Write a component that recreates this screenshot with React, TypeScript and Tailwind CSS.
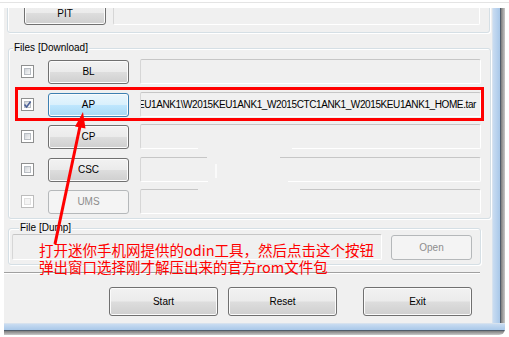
import React from "react";

type Row = {
  name: string;
  checked?: boolean;
  active?: boolean;
  disabled?: boolean;
  path?: string;
  gap: string;
};

const rows: Row[] = [
  { name: "BL", gap: "mt-0" },
  {
    name: "AP",
    checked: true,
    active: true,
    path: "W2015KEU1ANK1\\W2015KEU1ANK1_W2015CTC1ANK1_W2015KEU1ANK1_HOME.tar",
    gap: "mt-[8px]",
  },
  { name: "CP", gap: "mt-[7px]" },
  { name: "CSC", gap: "mt-[8px]" },
  { name: "UMS", disabled: true, gap: "mt-[7px]" },
];

const btn = "flex items-center justify-center rounded-[3px] border text-[10px]";
const btnNormal =
  "text-black border-[#707070] shadow-[inset_0_0_0_1px_#fbfbfb] bg-[linear-gradient(#f2f2f2_0%,#ebebeb_48%,#dddddd_52%,#cfcfcf_100%)]";
const btnHover =
  "text-black border-[#3c7fb1] shadow-[inset_0_0_0_1px_#fbfbfb] bg-[linear-gradient(#eaf6fd_0%,#d9f0fc_48%,#bee6fd_52%,#a7d9f5_100%)]";
const btnDisabled = "text-[#8d8d8d] border-[#b5b8ba] bg-[#f4f4f4]";

const textBox =
  "rounded-[2px] border border-t-[#c6c6c6] border-l-[#d6d6d6] border-r-white border-b-white bg-[#f0f0f0]";

const groupBox =
  "relative rounded-[3px] border border-[#d5dfe5] shadow-[inset_1px_1px_0_#fff,1px_1px_0_#fff]";

function CheckBox({ checked, disabled }: { checked?: boolean; disabled?: boolean }) {
  return (
    <div
      className={
        "flex h-[13px] w-[13px] shrink-0 items-center justify-center border bg-white p-[2px] " +
        (disabled ? "border-[#bcbcbc]" : "border-[#8e8f8f]")
      }
    >
      <div
        className={
          "relative h-full w-full border " +
          (disabled
            ? "border-[#e0e0e0] bg-[#f4f4f4]"
            : "border-[#b8bdc3] bg-[linear-gradient(135deg,#cfd3d8,#f7f7f7)]")
        }
      >
        {checked && (
          <svg viewBox="0 0 9 9" className="absolute -left-[2px] -top-[2px] h-[9px] w-[9px]">
            <path d="M1.5 4.5 L3.6 7 L7.6 1.6" fill="none" stroke="#4a5f97" strokeWidth="1.6" />
          </svg>
        )}
      </div>
    </div>
  );
}

export default function App() {
  return (
    <div className="relative flex h-[337px] w-[509px] flex-col overflow-hidden bg-white font-['Liberation_Sans',Arial,sans-serif]">
      {/* top edge */}
      <div className="h-[8px] shrink-0 pt-[2px]">
        <div className="h-px bg-[#e4e4e4]" />
      </div>

      <div className="flex pl-[4px]">
        <div className="flex h-[327px] w-[501px] flex-col overflow-hidden rounded-br-[6px]">
          <div className="flex min-h-0 flex-1">
            {/* window content */}
            <div className="flex w-[488px] flex-col overflow-hidden bg-[#f0f0f0]">
              {/* PIT group */}
              <div className={groupBox + " -mt-[14px] ml-[3px] h-[39px] w-[483px] shrink-0"}>
                <div className="flex items-start pl-[16px] pt-[6px]">
                  <button className={btn + " " + btnNormal + " h-[24px] w-[82px]"}>PIT</button>
                  <div className={textBox + " -mt-px ml-[7px] h-[25px] w-[367px]"} />
                </div>
              </div>

              {/* Files [Download] */}
              <div className={groupBox + " ml-[4px] mt-[15px] h-[171px] w-[483px] shrink-0"}>
                <span className="absolute -top-[7px] left-[4px] bg-[#f0f0f0] px-px text-[10px] leading-[12px] text-black">
                  Files [Download]
                </span>
                <div className="flex flex-col pl-[12px] pt-[10px]">
                  {rows.map((r) => (
                    <div key={r.name} className={"flex h-[25px] items-center " + r.gap}>
                      <CheckBox checked={r.checked} disabled={r.disabled} />
                      <button
                        className={
                          btn +
                          " ml-[14px] h-[24px] w-[81px] " +
                          (r.disabled ? btnDisabled : r.active ? btnHover : btnNormal)
                        }
                      >
                        {r.name}
                      </button>
                      <div
                        className={
                          textBox +
                          " ml-[11px] flex h-[25px] w-[341px] items-center justify-end overflow-hidden pr-[4px]"
                        }
                      >
                        {r.path && (
                          <span className="whitespace-nowrap text-[10px] tracking-[-0.4px] text-black">
                            {r.path}
                          </span>
                        )}
                      </div>
                    </div>
                  ))}
                </div>
              </div>

              {/* File [Dump] */}
              <div className={groupBox + " ml-[4px] mt-[9px] h-[37px] w-[473px] shrink-0"}>
                <span className="absolute -top-[7px] left-[10px] bg-[#f0f0f0] px-px text-[10px] leading-[12px] text-black">
                  File [Dump]
                </span>
                <div className="flex items-start pl-[3px] pt-[5px]">
                  <div className={textBox + " h-[26px] w-[370px]"} />
                  <button className={btn + " " + btnDisabled + " ml-[9px] mt-px h-[25px] w-[81px]"}>
                    Open
                  </button>
                </div>
              </div>

              {/* separator */}
              <div className="mt-[7px] h-[2px] w-[476px] shrink-0 border-t border-b border-t-[#a0a0a0] border-b-white" />

              {/* action buttons */}
              <div className="ml-[105px] mt-[13px] flex shrink-0">
                <button className={btn + " " + btnNormal + " h-[29px] w-[109px]"}>Start</button>
                <button className={btn + " " + btnNormal + " ml-[10px] h-[29px] w-[109px]"}>Reset</button>
                <button className={btn + " " + btnNormal + " ml-[26px] h-[29px] w-[109px]"}>Exit</button>
              </div>
            </div>

            {/* right frame */}
            <div className="flex w-[13px] shrink-0">
              <div className="w-px bg-[#d7e2ee]" />
              <div className="w-[7px] bg-[linear-gradient(to_right,#c9dcf1,#a9c8e9)]" />
              <div className="w-px bg-[#4f5c6a]" />
              <div className="w-[4px] bg-[linear-gradient(to_right,#7c7c7c,#c9c9c9)]" />
            </div>
          </div>

          {/* bottom frame */}
          <div className="flex h-[12px] shrink-0 flex-col">
            <div className="h-px bg-[#d7e2ee]" />
            <div className="h-[6px] bg-[linear-gradient(#c9dcf1,#a9c8e9)]" />
            <div className="h-px bg-[#4f5c6a]" />
            <div className="h-[4px] bg-[linear-gradient(#7c7c7c,#c9c9c9)]" />
          </div>
        </div>
      </div>

      {/* erased patches in the screenshot */}
      <div className="absolute left-[198px] top-[146px] h-[4px] w-[94px] bg-[#f0f0f0]" />
      <div className="absolute left-[207px] top-[155px] h-[4px] w-[73px] bg-[#f0f0f0]" />
      <div className="absolute left-[208px] top-[180px] h-[4px] w-[80px] bg-[#f0f0f0]" />
      <div className="absolute left-[198px] top-[188px] h-[3px] w-[102px] bg-[#f0f0f0]" />
      <div className="absolute left-[215px] top-[164px] h-[14px] w-[2px] bg-[#fafafa]" />

      {/* red annotation */}
      <div className="absolute left-[15px] top-[87px] h-[34px] w-[469px] border-[3px] border-[#ff0000]" />
      <svg className="absolute left-0 top-0 h-[337px] w-[509px]" viewBox="0 0 509 337">
        <line x1="55" y1="244" x2="80.5" y2="124" stroke="#ff0000" strokeWidth="3" />
        <polygon points="83,112 85.5,128.6 75,126.4" fill="#ff0000" />
      </svg>
      <div className="absolute left-[39px] top-[241px] whitespace-nowrap font-['Noto_Sans_CJK_SC',sans-serif] text-[14.5px] leading-[17px] text-[#ff0000]">
        <div>打开迷你手机网提供的odin工具，然后点击这个按钮</div>
        <div>弹出窗口选择刚才解压出来的官方rom文件包</div>
      </div>
    </div>
  );
}
